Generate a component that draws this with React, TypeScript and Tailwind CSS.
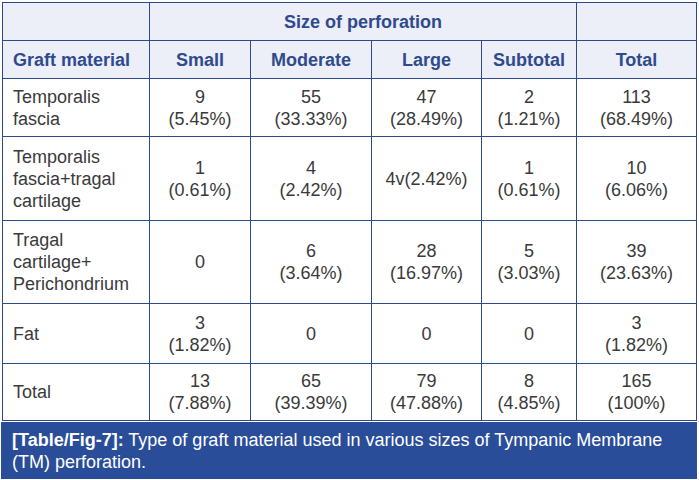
const rows = [
  {
    label: ['Temporalis', 'fascia'],
    cells: [['9', '(5.45%)'], ['55', '(33.33%)'], ['47', '(28.49%)'], ['2', '(1.21%)'], ['113', '(68.49%)']],
    h: 'h-[58px]',
  },
  {
    label: ['Temporalis', 'fascia+tragal', 'cartilage'],
    cells: [['1', '(0.61%)'], ['4', '(2.42%)'], ['4v(2.42%)'], ['1', '(0.61%)'], ['10', '(6.06%)']],
    h: 'h-[84px]',
  },
  {
    label: ['Tragal', 'cartilage+', 'Perichondrium'],
    cells: [['0'], ['6', '(3.64%)'], ['28', '(16.97%)'], ['5', '(3.03%)'], ['39', '(23.63%)']],
    h: 'h-[83px]',
  },
  {
    label: ['Fat'],
    cells: [['3', '(1.82%)'], ['0'], ['0'], ['0'], ['3', '(1.82%)']],
    h: 'h-[60px]',
  },
  {
    label: ['Total'],
    cells: [['13', '(7.88%)'], ['65', '(39.39%)'], ['79', '(47.88%)'], ['8', '(4.85%)'], ['165', '(100%)']],
    h: 'h-[57px]',
  },
]

const bd = 'border border-[#2c4a88]'

export default function App() {
  return (
    <div
      className="w-[699px] h-[480px] bg-white pt-[2px]"
      style={{ fontFamily: '"Liberation Sans", Arial, sans-serif' }}
    >
      <table className="ml-[2px] w-[694px] table-fixed border-collapse text-[18px] leading-[22px]">
        <colgroup>
          <col className="w-[147px]" />
          <col className="w-[101px]" />
          <col className="w-[121px]" />
          <col className="w-[110px]" />
          <col className="w-[95px]" />
          <col className="w-[120px]" />
        </colgroup>
        <thead className="bg-[#eceef8] text-[#2f4a8e] font-bold">
          <tr className="h-[38px]">
            <th className={bd}></th>
            <th className={`${bd} text-center font-bold`} colSpan={4}>
              Size of perforation
            </th>
            <th className={bd}></th>
          </tr>
          <tr className="h-[38px]">
            <th className={`${bd} border-t-0 text-left pl-[10px] font-bold align-middle`}>Graft material</th>
            <th className={`${bd} font-bold`}>Small</th>
            <th className={`${bd} font-bold`}>Moderate</th>
            <th className={`${bd} font-bold`}>Large</th>
            <th className={`${bd} font-bold`}>Subtotal</th>
            <th className={`${bd} border-t-0 font-bold`}>Total</th>
          </tr>
        </thead>
        <tbody className="text-[#3a3a3a]">
          {rows.map((r, i) => (
            <tr key={i} className={r.h}>
              <td className={`${bd} pl-[10px]`}>
                {r.label.map((l, j) => (
                  <div key={j}>{l}</div>
                ))}
              </td>
              {r.cells.map((c, j) => (
                <td key={j} className={`${bd} text-center`}>
                  {c.map((t, k) => (
                    <div key={k}>{t}</div>
                  ))}
                </td>
              ))}
            </tr>
          ))}
        </tbody>
      </table>
      <div className="ml-[1px] mt-[1px] w-[696px] h-[57px] bg-[#2a4d99] text-white text-[18px] leading-[22px] px-[11px] pt-[7px]">
        <span className="font-bold">[Table/Fig-7]:</span> Type of graft material used in various sizes of Tympanic Membrane
        (TM) perforation.
      </div>
    </div>
  )
}
